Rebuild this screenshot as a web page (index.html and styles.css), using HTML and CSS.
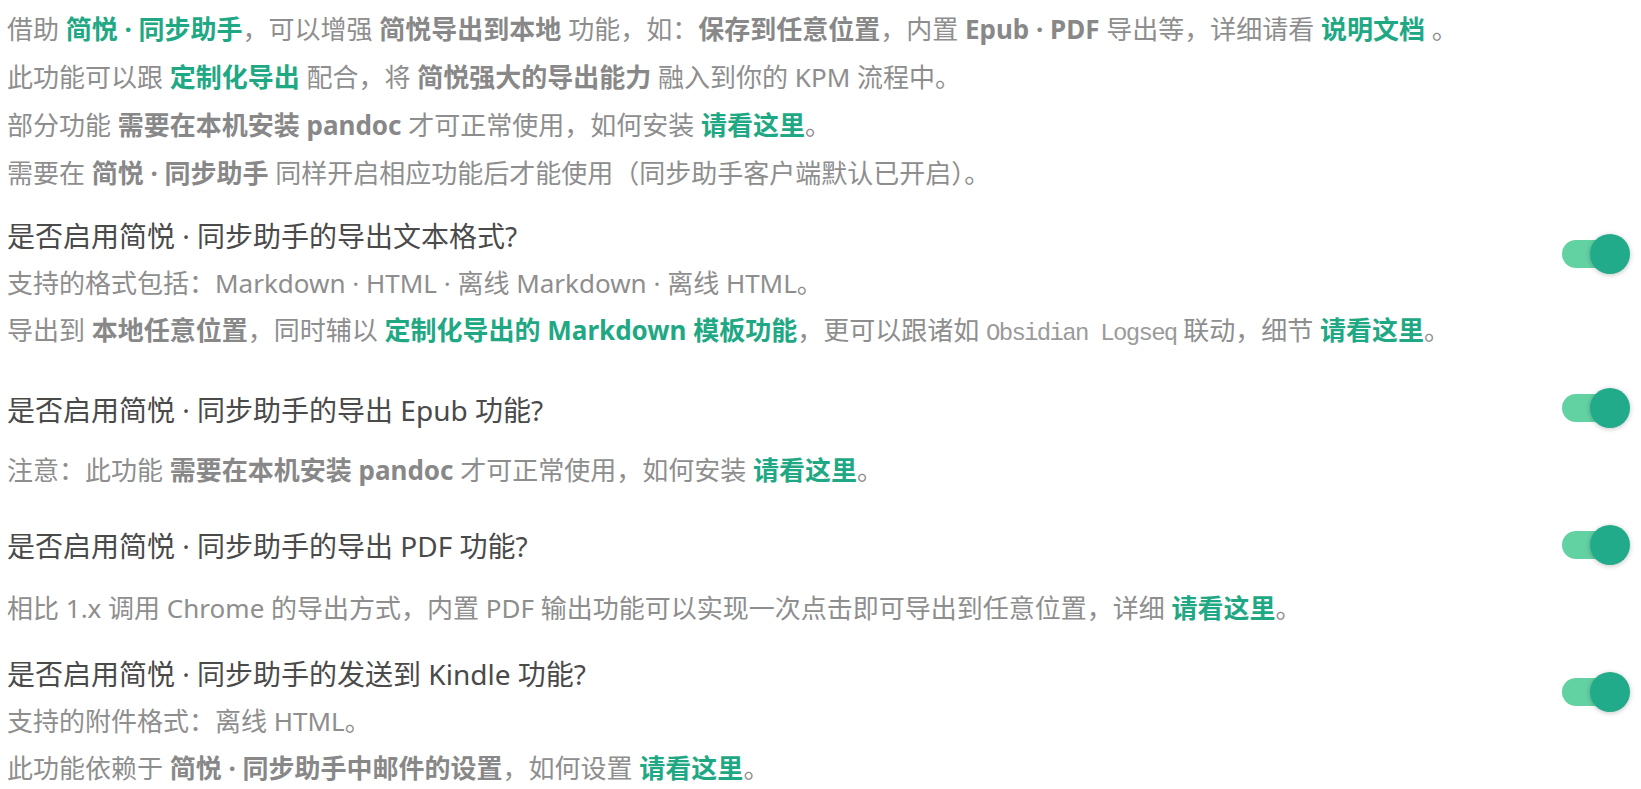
FILE: index.html
```html
<!DOCTYPE html>
<html lang="zh-CN">
<head>
<meta charset="utf-8">
<title>简悦 · 同步助手</title>
<link rel="stylesheet" href="styles.css">
</head>
<body>
<div class="page">
  <div class="intro">
    <p class="line">借助 <a class="link">简悦 · 同步助手</a>，可以增强 <b>简悦导出到本地</b> 功能，如：<b>保存到任意位置</b>，内置 <b>Epub · PDF</b> 导出等，详细请看 <a class="link">说明文档</a> 。</p>
    <p class="line">此功能可以跟 <a class="link">定制化导出</a> 配合，将 <b>简悦强大的导出能力</b> 融入到你的 KPM 流程中。</p>
    <p class="line">部分功能 <b>需要在本机安装 pandoc</b> 才可正常使用，如何安装 <a class="link">请看这里</a>。</p>
    <p class="line">需要在 <b>简悦 · 同步助手</b> 同样开启相应功能后才能使用（同步助手客户端默认已开启）。</p>
  </div>

  <section class="setting setting-first">
    <div class="setting-body">
      <h3 class="setting-title">是否启用简悦 · 同步助手的导出文本格式?</h3>
      <p class="desc">支持的格式包括：Markdown · HTML · 离线 Markdown · 离线 HTML。</p>
      <p class="desc">导出到 <b>本地任意位置</b>，同时辅以 <a class="link">定制化导出的 Markdown 模板功能</a>，更可以跟诸如 <code class="mono">Obsidian Logseq</code> 联动，细节 <a class="link">请看这里</a>。</p>
    </div>
    <div class="toggle toggle-low"><span class="track"></span><span class="thumb"></span></div>
  </section>

  <section class="setting setting-epub">
    <div class="setting-body">
      <h3 class="setting-title">是否启用简悦 · 同步助手的导出 Epub 功能?</h3>
      <p class="desc desc-gap-a">注意：此功能 <b>需要在本机安装 pandoc</b> 才可正常使用，如何安装 <a class="link">请看这里</a>。</p>
    </div>
    <div class="toggle"><span class="track"></span><span class="thumb"></span></div>
  </section>

  <section class="setting setting-pdf">
    <div class="setting-body">
      <h3 class="setting-title">是否启用简悦 · 同步助手的导出 PDF 功能?</h3>
      <p class="desc desc-gap-b">相比 1.x 调用 Chrome 的导出方式，内置 PDF 输出功能可以实现一次点击即可导出到任意位置，详细 <a class="link">请看这里</a>。</p>
    </div>
    <div class="toggle toggle-mid"><span class="track"></span><span class="thumb"></span></div>
  </section>

  <section class="setting setting-kindle">
    <div class="setting-body">
      <h3 class="setting-title">是否启用简悦 · 同步助手的发送到 Kindle 功能?</h3>
      <p class="desc">支持的附件格式：离线 HTML。</p>
      <p class="desc">此功能依赖于 <b>简悦 · 同步助手中邮件的设置</b>，如何设置 <a class="link">请看这里</a>。</p>
    </div>
    <div class="toggle toggle-low"><span class="track"></span><span class="thumb"></span></div>
  </section>
</div>
</body>
</html>
```

FILE: styles.css
```css
* {
  box-sizing: border-box;
}

html, body {
  margin: 0;
  padding: 0;
  background: #ffffff;
}

body {
  font-family: "Noto Sans", "Noto Sans CJK SC", sans-serif;
  color: #8e8e8e;
  overflow: hidden;
}

.page {
  width: 1641px;
  height: 789px;
  padding: 5px 11px 0 7px;
}

.intro .line {
  margin: 0;
  font-size: 26px;
  line-height: 48px;
  white-space: nowrap;
}

b {
  font-weight: 700;
  color: #888888;
}

.link {
  color: #1fa884;
  font-weight: 700;
  text-decoration: none;
}

.mono {
  font-family: "Liberation Mono", monospace;
  font-size: 24px;
  letter-spacing: -1.7px;
  color: #9a9a9a;
}

.setting {
  display: flex;
  justify-content: space-between;
  align-items: flex-start;
}

.setting-first {
  margin-top: 16px;
}

.setting-epub {
  margin-top: 29.5px;
}

.setting-pdf {
  margin-top: 29px;
}

.setting-kindle {
  margin-top: 19px;
}

.setting-title {
  margin: 0;
  font-size: 28px;
  font-weight: 400;
  line-height: 47px;
  color: #4a4a4a;
  white-space: nowrap;
}

.desc {
  margin: 0;
  font-size: 26px;
  line-height: 47px;
  white-space: nowrap;
}

.desc-gap-a {
  margin-top: 13px;
}

.desc-gap-b {
  margin-top: 15px;
}

.toggle {
  display: flex;
  align-items: center;
  height: 40px;
  width: 68px;
  margin-top: 1px;
  flex-shrink: 0;
}

.toggle-mid {
  margin-top: 2px;
}

.toggle-low {
  margin-top: 21px;
}

.track {
  display: block;
  width: 58px;
  height: 28px;
  border-radius: 14px;
  background: #63d2a3;
}

.thumb {
  display: block;
  width: 40px;
  height: 40px;
  margin-left: -30px;
  border-radius: 50%;
  background: #21ab8a;
  box-shadow: 0 1px 6px rgba(0, 0, 0, 0.12), 0 1px 4px rgba(0, 0, 0, 0.12);
}
```
